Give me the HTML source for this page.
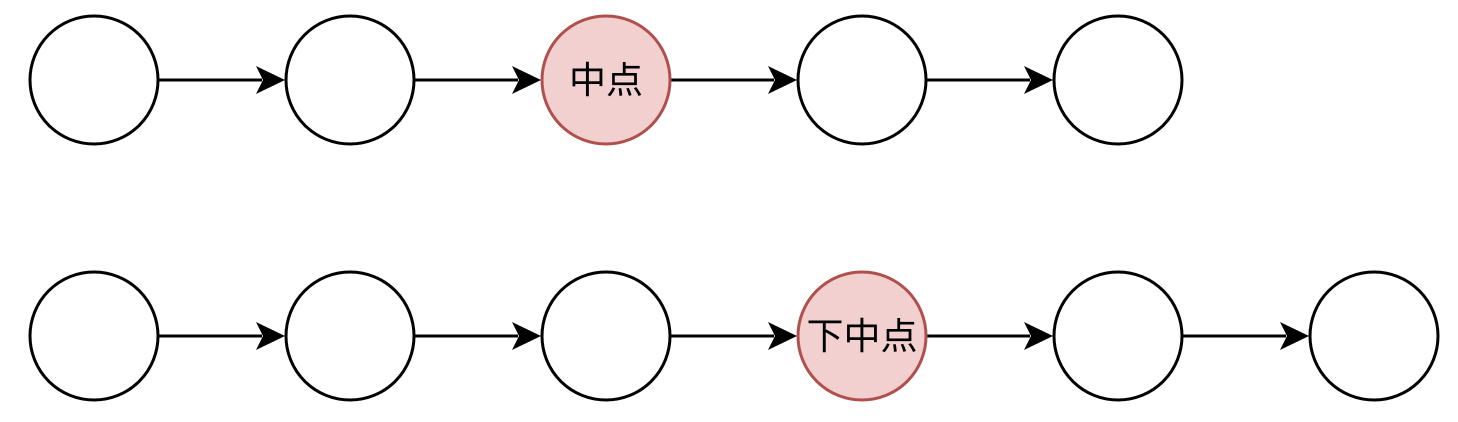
<!DOCTYPE html>
<html><head><meta charset="utf-8"><style>html,body{margin:0;padding:0;background:#fff;width:1458px;height:422px;overflow:hidden}</style></head>
<body>
<svg width="1458" height="422" xmlns="http://www.w3.org/2000/svg">
<g stroke="#000" stroke-width="3">
<line x1="157" y1="80" x2="262" y2="80"/><line x1="413" y1="80" x2="518" y2="80"/><line x1="669" y1="80" x2="774" y2="80"/><line x1="925" y1="80" x2="1030" y2="80"/>
<line x1="157" y1="336" x2="262" y2="336"/><line x1="413" y1="336" x2="518" y2="336"/><line x1="669" y1="336" x2="774" y2="336"/><line x1="925" y1="336" x2="1030" y2="336"/><line x1="1181" y1="336" x2="1286" y2="336"/>
</g>
<g fill="#000">
<path d="M285 80 L256 66 L263 80 L256 94 Z"/><path d="M541 80 L512 66 L519 80 L512 94 Z"/><path d="M797 80 L768 66 L775 80 L768 94 Z"/><path d="M1053 80 L1024 66 L1031 80 L1024 94 Z"/>
<path d="M285 336 L256 322 L263 336 L256 350 Z"/><path d="M541 336 L512 322 L519 336 L512 350 Z"/><path d="M797 336 L768 322 L775 336 L768 350 Z"/><path d="M1053 336 L1024 322 L1031 336 L1024 350 Z"/><path d="M1309 336 L1280 322 L1287 336 L1280 350 Z"/>
</g>
<g fill="#fff" stroke="#000" stroke-width="3">
<circle cx="94" cy="80" r="64"/><circle cx="350" cy="80" r="64"/><circle cx="862" cy="80" r="64"/><circle cx="1118" cy="80" r="64"/>
<circle cx="94" cy="336" r="64"/><circle cx="350" cy="336" r="64"/><circle cx="606" cy="336" r="64"/><circle cx="1118" cy="336" r="64"/><circle cx="1374" cy="336" r="64"/>
</g>
<g fill="#f2d0cf" stroke="#b0504c" stroke-width="3">
<circle cx="606" cy="80" r="64"/><circle cx="862" cy="336" r="64"/>
</g>
<g font-family="'Liberation Sans','Noto Sans CJK SC',sans-serif" font-size="37" text-anchor="middle" fill="#000">
<text x="606" y="93">中点</text>
<text x="862" y="349">下中点</text>
</g>
</svg>
</body></html>
